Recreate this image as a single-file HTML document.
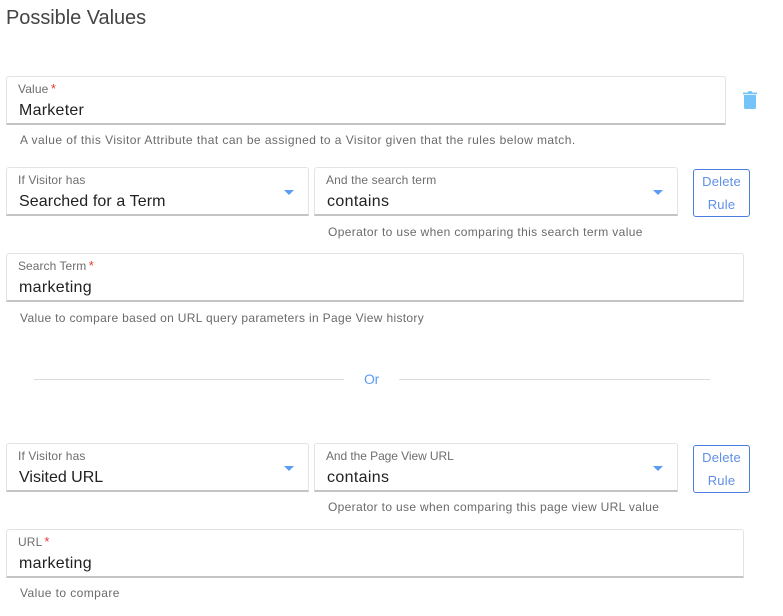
<!DOCTYPE html>
<html>
<head>
<meta charset="utf-8">
<style>
html,body{margin:0;padding:0;background:#fff;width:783px;height:616px;overflow:hidden;font-family:"Liberation Sans",sans-serif;}
.a{position:absolute;white-space:nowrap;}
.box{position:absolute;box-sizing:border-box;background:#fff;border:1px solid #e3e3e3;border-bottom:2px solid #c4c4c4;border-radius:3px 3px 0 0;height:49px;}
.lab{position:absolute;white-space:nowrap;font-size:12px;line-height:14px;color:#6e6e6e;letter-spacing:.12px;}
.lab i{font-style:normal;color:#e53935;font-size:13px;margin-left:-1px;}
.val{position:absolute;white-space:nowrap;font-size:16px;line-height:20px;color:#212121;}
.help{position:absolute;white-space:nowrap;font-size:12px;line-height:14px;color:#6a6a6a;letter-spacing:.42px;}
.arrow{position:absolute;width:0;height:0;border-left:5px solid transparent;border-right:5px solid transparent;border-top:5px solid #5b9cf5;}
.btn{position:absolute;box-sizing:border-box;width:57px;height:48px;border:1px solid #4a7fe0;border-radius:3px;color:#5f8fe8;font-size:13px;line-height:23px;text-align:center;letter-spacing:.2px;}
.line{position:absolute;height:1px;background:#dcdcdc;}
</style>
</head>
<body>
<div class="a" style="left:6px;top:6px;font-size:20px;line-height:24px;color:#444;letter-spacing:-.05px;">Possible Values</div>

<div class="box" style="left:6px;top:76px;width:720px;"></div>
<div class="lab" style="left:18px;top:82px;">Value <i>*</i></div>
<div class="val" style="left:19px;top:101px;letter-spacing:.25px;">Marketer</div>
<svg class="a" style="left:742px;top:90px;" width="16" height="20" viewBox="0 0 16 20"><path d="M1 2.500h4.800L6.500 1h3l.7 1.500H15v1.700H1z" fill="#74c4f7"/><path d="M2 5h12v12.500a1.500 1.500 0 0 1-1.500 1.500h-9A1.500 1.500 0 0 1 2 17.500z" fill="#74c4f7"/></svg>
<div class="help" style="left:20px;top:133px;letter-spacing:.44px;">A value of this Visitor Attribute that can be assigned to a Visitor given that the rules below match.</div>

<div class="box" style="left:6px;top:167px;width:303px;"></div>
<div class="lab" style="left:18px;top:173px;">If Visitor has</div>
<div class="val" style="left:19px;top:192px;letter-spacing:.1px;">Searched for a Term</div>
<div class="arrow" style="left:284px;top:190px;"></div>
<div class="box" style="left:314px;top:167px;width:364px;"></div>
<div class="lab" style="left:326px;top:173px;">And the search term</div>
<div class="val" style="left:327px;top:192px;letter-spacing:.35px;">contains</div>
<div class="arrow" style="left:653px;top:190px;"></div>
<div class="btn" style="left:693px;top:169px;">Delete<br>Rule</div>
<div class="help" style="left:328px;top:225px;letter-spacing:.365px;">Operator to use when comparing this search term value</div>

<div class="box" style="left:6px;top:253px;width:738px;"></div>
<div class="lab" style="left:18px;top:259px;letter-spacing:.05px;">Search Term <i>*</i></div>
<div class="val" style="left:19px;top:278px;letter-spacing:.3px;">marketing</div>
<div class="help" style="left:20px;top:311px;letter-spacing:.33px;">Value to compare based on URL query parameters in Page View history</div>

<div class="line" style="left:34px;top:379px;width:310px;"></div>
<div class="a" style="left:364px;top:371px;font-size:14px;line-height:16px;color:#5b9cf5;letter-spacing:-.3px;">Or</div>
<div class="line" style="left:399px;top:379px;width:311px;"></div>

<div class="box" style="left:6px;top:443px;width:303px;"></div>
<div class="lab" style="left:18px;top:449px;">If Visitor has</div>
<div class="val" style="left:19px;top:468px;">Visited URL</div>
<div class="arrow" style="left:284px;top:466px;"></div>
<div class="box" style="left:314px;top:443px;width:364px;"></div>
<div class="lab" style="left:326px;top:449px;letter-spacing:-.07px;">And the Page View URL</div>
<div class="val" style="left:327px;top:468px;letter-spacing:.35px;">contains</div>
<div class="arrow" style="left:653px;top:466px;"></div>
<div class="btn" style="left:693px;top:445px;">Delete<br>Rule</div>
<div class="help" style="left:328px;top:500px;letter-spacing:.33px;">Operator to use when comparing this page view URL value</div>

<div class="box" style="left:6px;top:529px;width:738px;"></div>
<div class="lab" style="left:18px;top:535px;">URL <i>*</i></div>
<div class="val" style="left:19px;top:554px;letter-spacing:.3px;">marketing</div>
<div class="help" style="left:20px;top:586px;">Value to compare</div>
</body>
</html>
